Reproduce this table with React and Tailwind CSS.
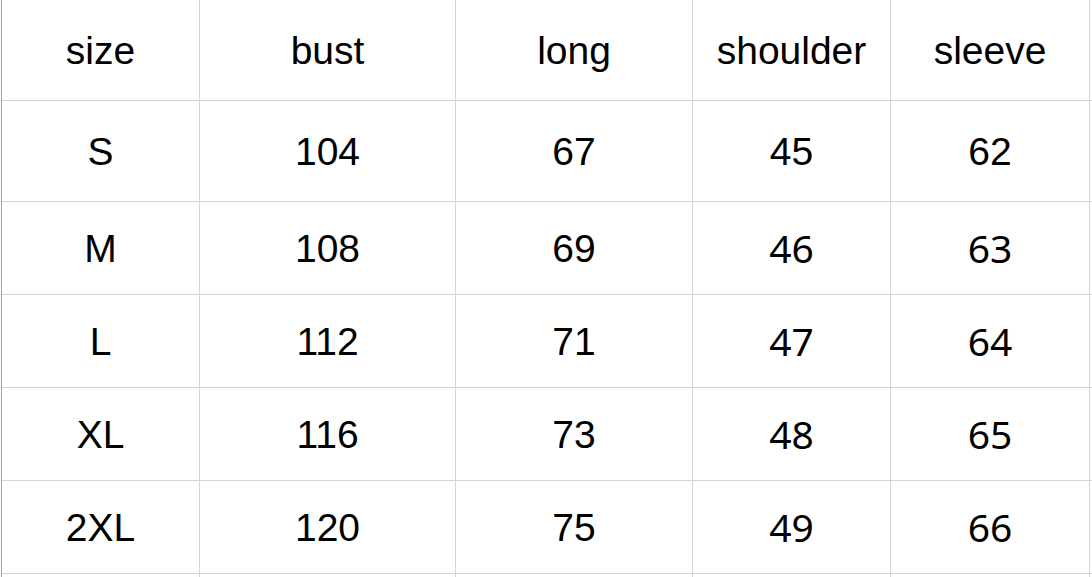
import React from "react";

const cols = ["w-[198px]", "w-[256px]", "w-[237px]", "w-[198px]", "w-[199px]"];

const header = ["size", "bust", "long", "shoulder", "sleeve"];

const rows = [
  { h: "h-[101px]", cells: ["S", "104", "67", "45", "62"], alt: [] },
  { h: "h-[93px]", cells: ["M", "108", "69", "46", "63"], alt: [3, 4] },
  { h: "h-[93px]", cells: ["L", "112", "71", "47", "64"], alt: [3, 4] },
  { h: "h-[93px]", cells: ["XL", "116", "73", "48", "65"], alt: [3, 4] },
  { h: "h-[93px]", cells: ["2XL", "120", "75", "49", "66"], alt: [3, 4] },
];

const Row = ({ height, cells, alt = [] }) => (
  <div className={`flex ${height}`}>
    {cells.map((c, i) => (
      <div
        key={i}
        className={`${cols[i]} shrink-0 flex items-center justify-center border-r border-b border-[#d4d4d4] ${
          alt.includes(i)
            ? "font-['Noto_Sans',sans-serif] text-[39px] pt-px"
            : "font-['Liberation_Sans',Arial,sans-serif] text-[39px] pt-[3px]"
        }`}
      >
        {c}
      </div>
    ))}
    <div className="flex-1 border-b border-[#d4d4d4]" />
  </div>
);

export default function App() {
  return (
    <div className="w-[1092px] h-[577px] overflow-hidden bg-white text-black pl-px">
      <div className="border-l border-[#a3a3a3] h-full">
        <Row height="h-[101px]" cells={header} />
        {rows.map((r, i) => (
          <Row key={i} height={r.h} cells={r.cells} alt={r.alt} />
        ))}
        <div className="flex h-[20px]">
          {cols.map((w, i) => (
            <div key={i} className={`${w} shrink-0 border-r border-[#d4d4d4]`} />
          ))}
        </div>
      </div>
    </div>
  );
}
